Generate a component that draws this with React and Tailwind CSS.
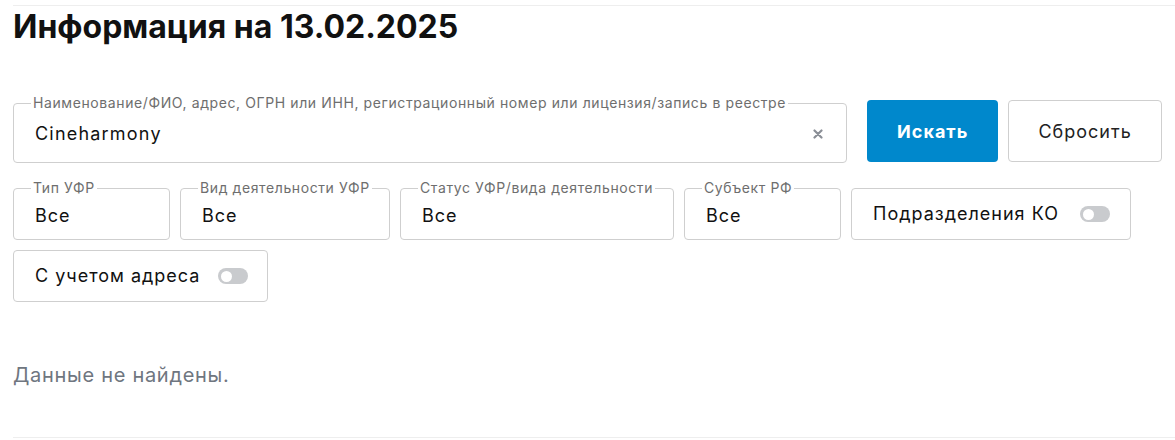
import React from "react";

function Toggle() {
  return (
    <span className="inline-flex h-[16px] w-[30px] shrink-0 items-center rounded-full bg-[#c9cbce] px-[3px]">
      <span className="h-[11px] w-[11px] rounded-full bg-white" />
    </span>
  );
}

function SelectBox({ label, width }) {
  return (
    <div className={`relative flex h-[52px] items-center rounded-[4px] border border-[#cfcfcf] pl-[21px] ${width}`}>
      <span className="absolute -top-[9px] left-[17px] bg-white px-[2px] text-[14px] leading-[16px] tracking-[0.6px] text-[#6e6e6e]">
        {label}
      </span>
      <span className="pt-[3px] text-[18px] leading-[24px] tracking-[1px] text-[#111]">Все</span>
    </div>
  );
}

function ToggleBox({ label, width, gap }) {
  return (
    <div className={`flex h-[52px] items-center rounded-[4px] border border-[#cfcfcf] pl-[21px] ${width} ${gap}`}>
      <span className="text-[18px] leading-[24px] tracking-[1px] text-[#111]">{label}</span>
      <Toggle />
    </div>
  );
}

export default function App() {
  return (
    <div className="bg-white pl-[13px] pt-[5px]" style={{ fontFamily: "Inter, 'Noto Sans', sans-serif" }}>
      <div className="border-t border-b border-[#eeeeee] pr-[13px] pt-[3px]">
        <h1 className="text-[32px] font-bold leading-[36px] text-[#111]">Информация на 13.02.2025</h1>

        <div className="mt-[55px] flex items-start gap-[10px]">
          <div className="relative mt-[3px] flex h-[60px] w-[835px] items-center rounded-[4px] border border-[#cfcfcf] pl-[21px] pr-[23px]">
            <span className="absolute -top-[9px] left-[17px] bg-white px-[2px] text-[14px] leading-[16px] tracking-[0.6px] text-[#6e6e6e]">
              Наименование/ФИО, адрес, ОГРН или ИНН, регистрационный номер или лицензия/запись в реестре
            </span>
            <span className="flex-1 pt-[2px] text-[18px] leading-[24px] tracking-[1.2px] text-[#111]">Cineharmony</span>
            <svg width="10" height="10" viewBox="0 0 10 10" className="mt-[2px]">
              <path d="M1.5 1.5 L8.5 8.5 M8.5 1.5 L1.5 8.5" stroke="#8a8e96" strokeWidth="2.2" strokeLinecap="round" />
            </svg>
          </div>
          <button className="ml-[10px] h-[62px] w-[131px] rounded-[4px] bg-[#0088cc] text-[18px] font-bold tracking-[1px] text-white">
            Искать
          </button>
          <button className="h-[62px] w-[154px] rounded-[4px] border border-[#cfcfcf] bg-white text-[18px] tracking-[1px] text-[#222]">
            Сбросить
          </button>
        </div>

        <div className="mt-[25px] flex flex-wrap gap-[10px]">
          <SelectBox label="Тип УФР" width="w-[157px]" />
          <SelectBox label="Вид деятельности УФР" width="w-[210px]" />
          <SelectBox label="Статус УФР/вида деятельности" width="w-[274px]" />
          <SelectBox label="Субъект РФ" width="w-[157px]" />
          <ToggleBox label="Подразделения КО" width="w-[280px]" gap="gap-[21px]" />
        </div>
        <div className="mt-[10px] flex">
          <ToggleBox label="С учетом адреса" width="w-[255px]" gap="gap-[18px]" />
        </div>

        <p className="mt-[61px] h-[74px] text-[20px] leading-[24px] tracking-[0.7px] text-[#6f7680]">Данные не найдены.</p>
      </div>
    </div>
  );
}
